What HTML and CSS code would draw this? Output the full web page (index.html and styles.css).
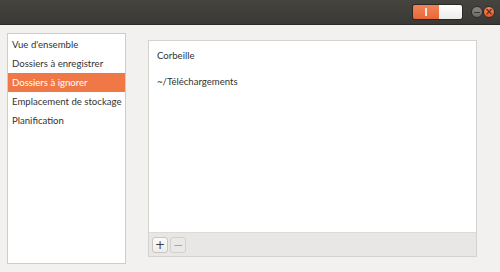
FILE: index.html
```html
<!DOCTYPE html>
<html lang="fr">
<head>
    <meta charset="UTF-8">
    <title>Sauvegardes</title>
    <link rel="stylesheet" href="styles.css">
</head>
<body>
    <div class="titlebar">
        <div class="switch">
            <div class="switch-on"><span class="switch-mark"></span></div>
            <div class="switch-off"></div>
        </div>
        <div class="wbtn wbtn-min"><span></span></div>
        <div class="wbtn wbtn-close">&#215;</div>
    </div>
    <div class="main">
        <ul class="sidebar">
            <li>Vue d'ensemble</li>
            <li>Dossiers à enregistrer</li>
            <li class="selected">Dossiers à ignorer</li>
            <li>Emplacement de stockage</li>
            <li>Planification</li>
        </ul>
        <div class="frame">
            <ul class="folders">
                <li>Corbeille</li>
                <li>~/Téléchargements</li>
            </ul>
            <div class="toolbar">
                <button class="tbtn">+</button>
                <button class="tbtn tbtn-off">&#8722;</button>
            </div>
        </div>
    </div>
</body>
</html>
```
FILE: styles.css
```css
body {
    margin: 0;
    width: 500px;
    height: 272px;
    background-color: #f2f1f0;
    font-family: 'Lato', 'DejaVu Sans', sans-serif;
    font-size: 9.6px;
    color: #333333;
    overflow: hidden;
}
.titlebar {
    height: 25px;
    background: linear-gradient(#46443f, #3a3935);
    border-bottom: 1px solid #2b2a27;
    display: flex;
    align-items: center;
    justify-content: flex-end;
    padding-right: 5px;
    box-sizing: border-box;
}
.switch {
    display: flex;
    height: 14px;
    border: 1px solid #2a2926;
    border-radius: 3px;
    overflow: hidden;
    margin-right: 8px;
}
.switch-on {
    width: 26px;
    background: linear-gradient(#f28456, #e8673a);
    display: flex;
    align-items: center;
    justify-content: center;
}
.switch-mark {
    width: 2px;
    height: 8px;
    background-color: #f8e8e0;
}
.switch-off {
    width: 23px;
    background: linear-gradient(#ffffff, #ececea);
}
.wbtn {
    width: 12px;
    height: 12px;
    border-radius: 50%;
    display: flex;
    align-items: center;
    justify-content: center;
    box-sizing: border-box;
    border: 1px solid #2e2d2a;
}
.wbtn-min {
    background: linear-gradient(#8a8883, #6c6a65);
}
.wbtn-min span {
    width: 6px;
    height: 1px;
    background-color: #3c3b37;
}
.wbtn-close {
    background: linear-gradient(#f58a5c, #e35a2a);
    color: #6a2a10;
    font-size: 10px;
    line-height: 1;
    font-family: 'DejaVu Sans', sans-serif;
    font-weight: bold;
}
.main {
    display: flex;
    padding: 8px 23px 8px 7px;
    height: 247px;
    box-sizing: border-box;
}
.sidebar {
    list-style: none;
    margin: 0;
    padding: 1px 0 0;
    width: 119px;
    height: 231px;
    background-color: #ffffff;
    border: 1px solid #cfcdc9;
    box-sizing: border-box;
}
.sidebar li {
    height: 19px;
    line-height: 19px;
    padding-left: 4px;
    white-space: nowrap;
}
.sidebar li.selected {
    background-color: #f07746;
    color: #ffffff;
}
.frame {
    margin-left: 22px;
    margin-top: 7px;
    flex: 1;
    height: 217px;
    display: flex;
    flex-direction: column;
    border: 1px solid #d4d2ce;
    box-sizing: border-box;
    background-color: #ffffff;
}
.folders {
    list-style: none;
    margin: 0;
    padding: 2px 0 0 8px;
    flex: 1;
}
.folders li {
    height: 26px;
    line-height: 26px;
}
.toolbar {
    height: 23px;
    background-color: #e8e7e5;
    border-top: 1px solid #dddbd8;
    display: flex;
    align-items: center;
    padding-left: 3px;
    gap: 2px;
}
.tbtn {
    width: 16px;
    height: 16px;
    padding: 0;
    border: 1px solid #c9c7c3;
    border-radius: 3px;
    background: linear-gradient(#fbfbfa, #eeedeb);
    font-family: 'DejaVu Sans', sans-serif;
    font-size: 12px;
    line-height: 12px;
    color: #3c3c3c;
}
.tbtn-off {
    background: #eae9e7;
    border-color: #d3d1cd;
    color: #a8a6a2;
}
```
